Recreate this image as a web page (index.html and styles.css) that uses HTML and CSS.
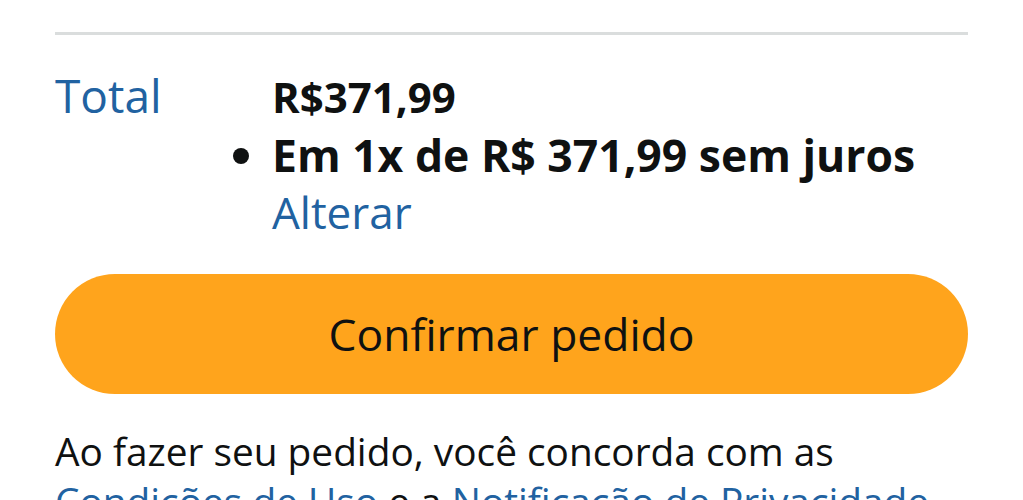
FILE: index.html
```html
<!DOCTYPE html>
<html lang="pt-BR">
<head>
  <meta charset="UTF-8" />
  <title>Confirmar pedido</title>
  <link rel="stylesheet" href="styles.css">
</head>
<body>
  <div class="checkout">
    <hr class="divider">

    <div class="summary">
      <div class="summary-label">Total</div>
      <div class="summary-value">
        <div class="price">R$371,99</div>
        <ul class="installments">
          <li>Em 1x de R$ 371,99 sem juros</li>
        </ul>
        <a class="link" href="#">Alterar</a>
      </div>
    </div>

    <button class="place-order" type="button">Confirmar pedido</button>

    <p class="legal">
      Ao fazer seu pedido, você concorda com as
      <a class="link" href="#">Condições de Uso</a> e a
      <a class="link" href="#">Notificação de Privacidade</a>
      da Amazon.
    </p>
  </div>
</body>
</html>
```

FILE: styles.css
```css
* {
  margin: 0;
  padding: 0;
  box-sizing: border-box;
}

body {
  background: #fff;
  color: #0f1111;
  font-family: "Open Sans", "Noto Sans", sans-serif;
}

.checkout {
  padding: 32px 55px 0;
}

.divider {
  border: none;
  border-top: 3px solid #dadddd;
}

.summary {
  display: flex;
  align-items: baseline;
  margin-top: 31px;
}

.summary-label {
  width: 217px;
  flex-shrink: 0;
  font-size: 46px;
  line-height: 58px;
  color: #2162a1;
}

.summary-value {
  display: flex;
  flex-direction: column;
  align-items: flex-start;
}

.price {
  font-size: 42px;
  line-height: 58px;
  font-weight: 700;
}

.installments {
  list-style: disc outside;
  font-size: 44.5px;
  line-height: 58px;
  font-weight: 700;
}

.link {
  color: #2162a1;
  text-decoration: none;
}

.summary-value .link {
  font-size: 44px;
  line-height: 56px;
}

.place-order {
  display: block;
  width: 100%;
  height: 120px;
  margin-top: 34px;
  border: none;
  border-radius: 60px;
  background: #ffa41c;
  color: #0f1111;
  font-family: inherit;
  font-size: 44.4px;
}

.legal {
  margin-top: 32px;
  font-size: 38.8px;
  line-height: 50px;
}
```
